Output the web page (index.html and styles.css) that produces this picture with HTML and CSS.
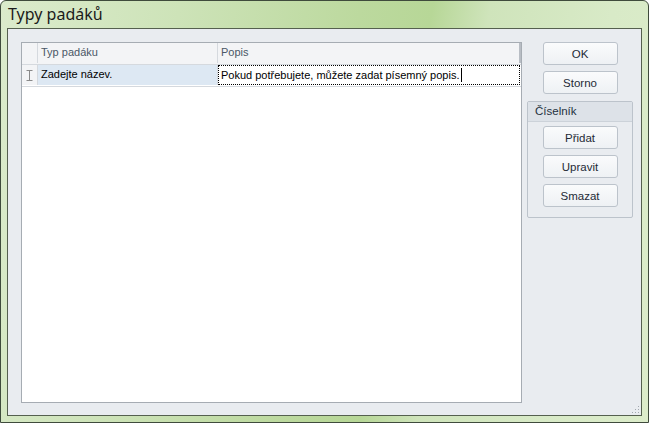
FILE: index.html
```html
<!DOCTYPE html>
<html lang="cs">
<head>
    <meta charset="UTF-8">
    <title>Typy padáků</title>
    <link rel="stylesheet" href="styles.css">
</head>
<body>
    <div class="window">
        <div class="titlebar">Typy padáků</div>
        <div class="client">
            <div class="grid">
                <div class="grid-row grid-head">
                    <div class="cell indicator"></div>
                    <div class="cell col-name">Typ padáku</div>
                    <div class="cell col-desc">Popis</div>
                </div>
                <div class="grid-row new-row">
                    <div class="cell indicator">
                        <svg width="7" height="11" viewBox="0 0 7 11">
                            <path d="M0.5 0.5h6M0.5 10.5h6M3.5 0.5v10" stroke="#8a8a8a" stroke-width="1" fill="none"/>
                        </svg>
                    </div>
                    <div class="cell col-name">Zadejte název.</div>
                    <div class="cell col-desc editing">Pokud potřebujete, můžete zadat písemný popis.<span class="caret"></span></div>
                </div>
            </div>

            <div class="sidebar">
                <button class="btn">OK</button>
                <button class="btn">Storno</button>
                <div class="group">
                    <div class="group-title">Číselník</div>
                    <div class="group-body">
                        <button class="btn">Přidat</button>
                        <button class="btn">Upravit</button>
                        <button class="btn">Smazat</button>
                    </div>
                </div>
            </div>
            <div class="grip"></div>
        </div>
    </div>
</body>
</html>
```

FILE: styles.css
```css
body {
    margin: 0;
    padding: 0;
    background-color: #ffffff;
    font-family: "Liberation Sans", Arial, sans-serif;
}

.window {
    width: 649px;
    height: 423px;
    box-sizing: border-box;
    border: 1px solid #3f4b3c;
    border-radius: 6px 6px 0 0;
    background: linear-gradient(100deg, #dbebcc 0%, #cde3b8 25%, #bcd99e 50%, #b7d797 60%, #cfe4bb 68%, #d8eac7 85%, #dcecca 100%);
    display: flex;
    flex-direction: column;
    padding: 0 6px 6px 6px;
}

.titlebar {
    height: 27px;
    font-family: "Noto Sans", "DejaVu Sans", sans-serif;
    font-size: 16px;
    color: #1b1b1b;
    padding-left: 1px;
    line-height: 26px;
}

.client {
    flex: 1;
    position: relative;
    display: flex;
    background-color: #e9ecf0;
    border: 1px solid #55604f;
    padding: 13px 0 12px 13px;
}

.grid {
    width: 501px;
    box-sizing: border-box;
    background-color: #ffffff;
    border: 1px solid #a6acb3;
    font-size: 11px;
}

.grid-row {
    display: flex;
    height: 21px;
    border-bottom: 1px solid #d5d9de;
}

.cell {
    box-sizing: border-box;
    height: 20px;
    line-height: 19px;
    padding-left: 3px;
    border-right: 1px solid #d5d9de;
    white-space: nowrap;
}

.indicator {
    width: 16px;
    padding: 0;
    background-color: #f3f4f6;
    display: flex;
    align-items: center;
    justify-content: center;
}

.col-name {
    width: 180px;
}

.col-desc {
    flex: 1;
    border-right: none;
}

.grid-head {
    background-color: #f3f4f6;
}

.grid-head .cell {
    color: #4a5766;
}

.grid-head .col-desc {
    border-right: 2px solid #b8bdc4;
}

.new-row .col-name {
    background-color: #dde8f3;
    color: #000000;
}

.new-row .editing {
    border: 1px dotted #000000;
    margin-right: 1px;
    padding-left: 2px;
    line-height: 18px;
    color: #000000;
}

.caret {
    display: inline-block;
    width: 1px;
    height: 14px;
    background-color: #000000;
    vertical-align: -3px;
    margin-left: 2px;
}

.sidebar {
    margin-left: 5px;
    width: 106px;
    display: flex;
    flex-direction: column;
    align-items: center;
}

.btn {
    width: 75px;
    height: 23px;
    margin-bottom: 6px;
    font-family: "Liberation Sans", Arial, sans-serif;
    font-size: 11.5px;
    color: #1e2a36;
    background: linear-gradient(#fafbfc, #eef1f4);
    border: 1px solid #bcc3cb;
    border-radius: 3px;
    padding: 0;
}

.group {
    width: 106px;
    box-sizing: border-box;
    border: 1px solid #bcc3cb;
    border-radius: 2px;
    margin-top: 1px;
}

.group-title {
    height: 19px;
    line-height: 18px;
    font-size: 11.5px;
    color: #243140;
    padding-left: 7px;
    background-color: #dde2e8;
    border-bottom: 1px solid #ccd2d9;
}

.group-body {
    display: flex;
    flex-direction: column;
    align-items: center;
    padding-top: 4px;
    padding-bottom: 4px;
}

.grip {
    position: absolute;
    right: 2px;
    bottom: 2px;
    width: 8px;
    height: 8px;
    background-image: radial-gradient(circle, #a2a8ae 0.9px, transparent 1px);
    background-size: 3px 3px;
    clip-path: polygon(100% 0, 100% 100%, 0 100%);
}
```
